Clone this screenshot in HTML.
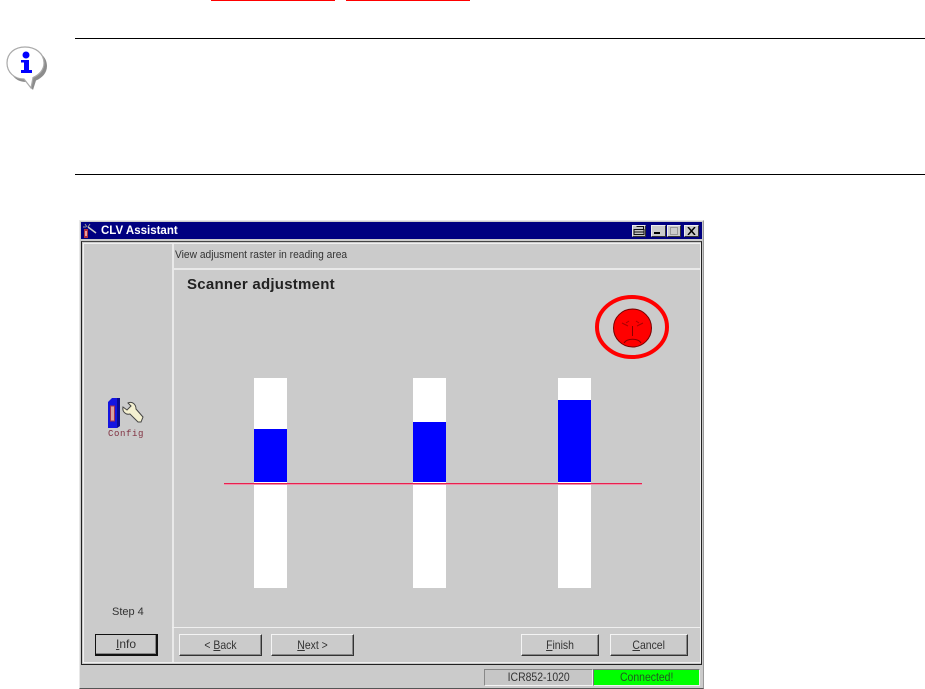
<!DOCTYPE html>
<html><head><meta charset="utf-8"><style>
html,body{margin:0;padding:0;background:#fff;width:925px;height:689px;overflow:hidden}
div{position:absolute;box-sizing:border-box}
body{font-family:"Liberation Sans",sans-serif;color:#222}
.t{font-size:12px;white-space:nowrap;line-height:14px;color:#333}
.b{background:#cbcbcb;border:1px solid;border-color:#f4f4f4 #333 #333 #f4f4f4;box-shadow:inset -1px -1px 0 #888;text-align:center;font-size:12px;line-height:20px;color:#333;height:22px;top:634px}
.b span,.s span{display:inline-block;transform:scaleX(.87)}
.c{background:#cbcbcb;top:225px;height:12px;border:1px solid;border-color:#eee #333 #333 #eee}
</style></head><body>
<div style="left:211px;top:0;width:124px;height:1px;background:#f00"></div>
<div style="left:346px;top:0;width:124px;height:1px;background:#f00"></div>
<div style="left:75px;top:38px;width:850px;height:1px;background:#000"></div>
<div style="left:75px;top:174px;width:850px;height:1px;background:#000"></div>

<svg style="position:absolute;left:0;top:40px" width="60" height="55" viewBox="0 0 60 55">
<path d="M28 10C38 10 47 16 47 26C47 33 42 38 36 40.500L33 50L26 42C16 42 10 35 10 26C10 16 18 10 28 10Z" fill="#666" opacity=".75"/>
<path d="M25 7C35 7 44 13 44 23C44 30 39 35 33 37.500L31 48L24 39C14 39 7 32 7 23C7 13 15 7 25 7Z" fill="#fff" stroke="#aaa" stroke-width="1.200"/>
<circle cx="26" cy="15" r="3.500" fill="#00f"/>
<path d="M21 20H29V30H32V33H21V30H24V22.500H21Z" fill="#00f"/>
</svg>

<!-- window -->
<div style="left:79px;top:220px;width:625px;height:469px;background:#cbcbcb;border-top:1px solid #e8e8e8;border-left:1px solid #e8e8e8;border-right:1px solid #999;border-bottom:1px solid #555"></div>
<div style="left:81px;top:222px;width:621px;height:17px;background:#000080"></div>
<svg style="position:absolute;left:82px;top:222px" width="18" height="17" viewBox="0 0 18 17">
<rect x="2" y="7" width="4" height="9" fill="#b03040"/><rect x="3" y="9" width="2" height="5" fill="#e8a0a0"/>
<path d="M6 5L14 11" stroke="#ccc" stroke-width="1.500"/><path d="M3 2L5 5M8 2L6 5M1 5H4" stroke="#999" stroke-width="1"/>
</svg>
<div style="left:101px;top:224px;color:#fff;font-weight:bold;font-size:11.500px;line-height:15px;white-space:nowrap">CLV Assistant</div>
<div class="c" style="left:632px;width:14px;background:#c4c4c4"></div>
<svg style="position:absolute;left:633px;top:226px" width="12" height="10" viewBox="0 0 12 10"><path d="M3.500 .500H10.500V3M1 3.500H11V8.500H1ZM1 6H11" fill="none" stroke="#111"/></svg>
<div class="c" style="left:651px;width:15px"></div>
<div style="left:654px;top:232px;width:6px;height:2px;background:#000"></div>
<div class="c" style="left:667px;width:14px"></div>
<div style="left:670px;top:227px;width:8px;height:8px;border:1px solid #999"></div>
<div class="c" style="left:684px;width:15px"></div>
<svg style="position:absolute;left:687px;top:227px" width="9" height="8"><path d="M1 0L8 8M8 0L1 8" stroke="#000" stroke-width="1.500"/></svg>

<!-- frame -->
<div style="left:81px;top:241px;width:621px;height:424px;border:1px solid #222;border-top-color:#444"></div>
<div style="left:83px;top:243px;width:618px;height:1px;background:#f0f0f0"></div>
<div style="left:83px;top:243px;width:1px;height:419px;background:#f0f0f0"></div>
<div style="left:172px;top:244px;width:2px;height:418px;background:#e9e9e9"></div>
<div style="left:174px;top:268px;width:527px;height:2px;background:#e9e9e9"></div>
<div style="left:172px;top:627px;width:529px;height:1px;background:#efefef"></div>
<div style="left:83px;top:662px;width:618px;height:1px;background:#efefef"></div>
<div style="left:700px;top:244px;width:1px;height:418px;background:#efefef"></div>

<div class="t" style="left:175px;top:248px;font-size:11px;transform:scaleX(.93);transform-origin:left center">View adjusment raster in reading area</div>
<div style="left:187px;top:276px;font-weight:bold;font-size:15px;line-height:17px;letter-spacing:.25px;color:#222;white-space:nowrap">Scanner adjustment</div>

<!-- face -->
<svg style="position:absolute;left:590px;top:290px" width="85" height="75" viewBox="0 0 85 75">
<ellipse cx="42" cy="37" rx="35" ry="30" fill="none" stroke="#f00" stroke-width="4"/>
<circle cx="42.500" cy="38" r="19" fill="#f00" stroke="#700" stroke-width="1"/>
<path d="M32 33L38 36M36 33L39 31M53 33L47 36M49 33L46 31" stroke="#a00" stroke-width="1" fill="none"/>
<path d="M42.500 36V46M34 53C37 48 48 48 51 53" stroke="#800" stroke-width="1" fill="none"/>
</svg>

<!-- config icon -->
<svg style="position:absolute;left:105px;top:397px" width="42" height="33" viewBox="0 0 42 33">
<path d="M3 5L7 1H15V29L12 31H3Z" fill="#1414e0"/>
<path d="M12 1H15V29L12 31Z" fill="#0a0a90"/>
<rect x="5.500" y="9" width="4" height="15" fill="#d8a0a0" stroke="#a03050"/>
<path d="M18 10L22 13L26 9L23 6C27 4 31 7 31 12L38 20L36 25L33 25L25 17C21 18 17 15 18 10Z" fill="#f4f0d0" stroke="#444"/>
</svg>
<div style="left:108px;top:429px;font-size:9px;letter-spacing:.6px;line-height:10px;color:#803040;white-space:nowrap;font-family:'Liberation Mono',monospace">Config</div>

<!-- bars -->
<div style="left:254px;top:378px;width:33px;height:210px;background:#fff"></div>
<div style="left:254px;top:429px;width:33px;height:53px;background:#00f"></div>
<div style="left:413px;top:378px;width:33px;height:210px;background:#fff"></div>
<div style="left:413px;top:422px;width:33px;height:60px;background:#00f"></div>
<div style="left:558px;top:378px;width:33px;height:210px;background:#fff"></div>
<div style="left:558px;top:400px;width:33px;height:82px;background:#00f"></div>
<div style="left:224px;top:483px;width:418px;height:1px;background:#e8204f"></div>
<div style="left:224px;top:484px;width:418px;height:1px;background:#ee90a8"></div>

<div class="t" style="left:112px;top:605px;font-size:11px">Step 4</div>

<div class="b" style="left:95px;width:63px;border:1px solid #111;border-right-width:2px;border-bottom-width:2px;line-height:19px"><u>I</u>nfo</div>
<div class="b" style="left:179px;width:83px"><span>&lt; <u>B</u>ack</span></div>
<div class="b" style="left:271px;width:83px"><span><u>N</u>ext &gt;</span></div>
<div class="b" style="left:521px;width:78px"><span><u>F</u>inish</span></div>
<div class="b" style="left:610px;width:78px"><span><u>C</u>ancel</span></div>

<div class="s" style="left:484px;top:669px;width:109px;height:17px;background:#c6c6c6;border:1px solid;border-color:#888 #eee #f4f4f4 #888;text-align:center;font-size:12px;line-height:15px;color:#333"><span>ICR852-1020</span></div>
<div class="s" style="left:593px;top:669px;width:107px;height:17px;background:#0f0;border:1px solid;border-color:#777 #eee #eee #777;text-align:center;font-size:12px;line-height:15px;color:#225522"><span>Connected!</span></div>
</body></html>
